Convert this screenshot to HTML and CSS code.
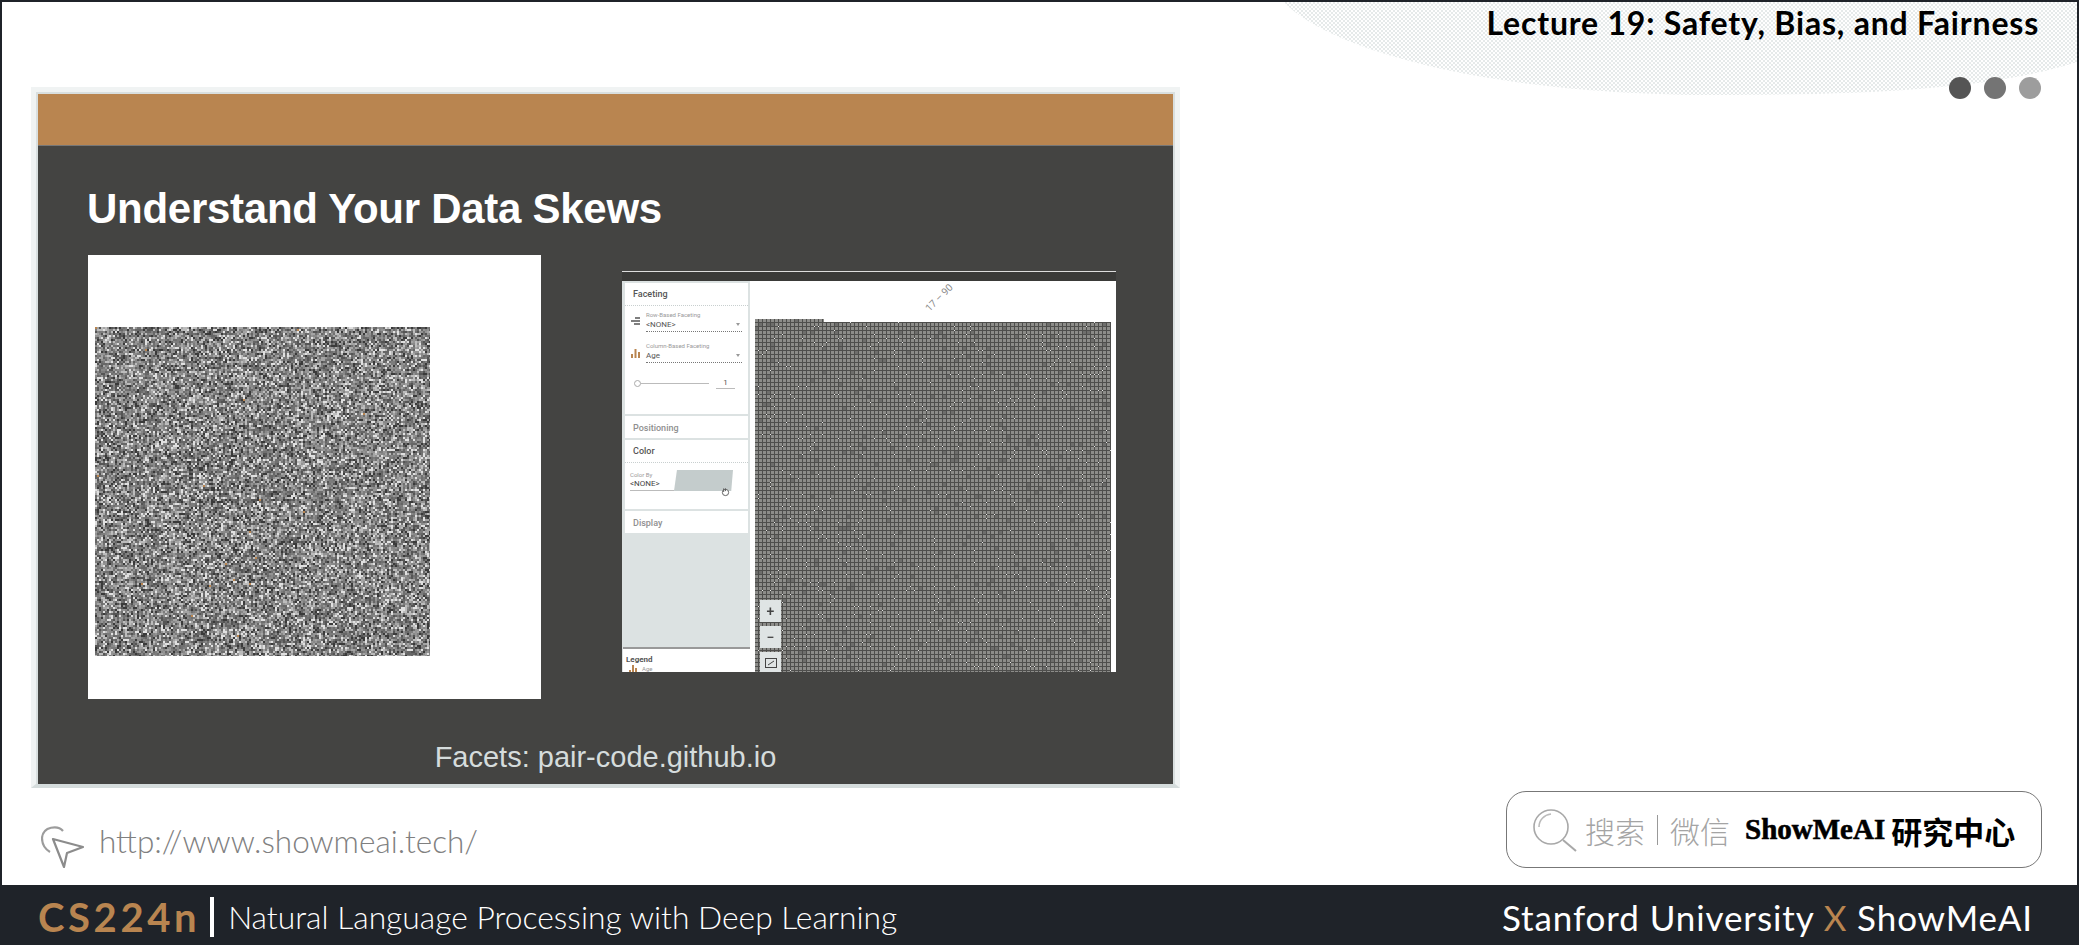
FILE: index.html
```html
<!DOCTYPE html>
<html lang="en">
<head>
    <meta charset="UTF-8">
    <title>Lecture 19: Safety, Bias, and Fairness</title>
    <link rel="stylesheet" href="styles.css">
</head>
<body>
    <div class="page">
        <div class="main">
            <svg class="arc" width="796" height="97" viewBox="0 0 796 97">
                <defs>
                    <pattern id="dither" width="4" height="4" patternUnits="userSpaceOnUse">
                        <rect width="2" height="2" fill="#e6eaea"/>
                        <rect x="2" y="2" width="2" height="2" fill="#e6eaea"/>
                    </pattern>
                </defs>
                <path d="M3 0C40 40 180 93 440 93C600 93 720 85 796 60L796 0Z" fill="url(#dither)"/>
            </svg>
            <div class="dots">
                <span class="dot dot1"></span>
                <span class="dot dot2"></span>
                <span class="dot dot3"></span>
            </div>

            <div class="head">
                <div class="lecture">Lecture 19: Safety, Bias, and Fairness</div>
            </div>

            <div class="slide">
                <div class="slide-bar"></div>
                <div class="slide-body">
                    <h1 class="slide-title">Understand Your Data Skews</h1>
                    <div class="figs">
                        <div class="scatter">
                            <canvas id="scatter" width="335" height="329"></canvas>
                        </div>
                        <div class="shot">
                            <div class="shot-strip"></div>
                            <div class="shot-main">
                                <div class="side">
                                    <div class="panel facet-panel">
                                        <div class="panel-title">Faceting</div>
                                        <div class="facet-row">
                                            <svg class="facet-icon" width="10" height="9" viewBox="0 0 10 9">
                                                <path d="M4 1H9M0 4H9M3 7H9" stroke="#555" stroke-width="1.6"/>
                                            </svg>
                                            <div class="facet-field">
                                                <div class="tiny">Row-Based Faceting</div>
                                                <div class="select"><span>&lt;NONE&gt;</span><span class="caret"></span></div>
                                            </div>
                                        </div>
                                        <div class="facet-row">
                                            <svg class="facet-icon" width="10" height="10" viewBox="0 0 10 10">
                                                <path d="M1 10V6M4.500 10V1M8 10V4" stroke="#b98550" stroke-width="2"/>
                                            </svg>
                                            <div class="facet-field">
                                                <div class="tiny">Column-Based Faceting</div>
                                                <div class="select"><span>Age</span><span class="caret"></span></div>
                                            </div>
                                        </div>
                                        <div class="slider-row">
                                            <span class="knob"></span>
                                            <span class="track"></span>
                                            <span class="slider-val">1</span>
                                        </div>
                                    </div>
                                    <div class="panel closed-panel"><div class="panel-title muted">Positioning</div></div>
                                    <div class="panel color-panel">
                                        <div class="panel-title">Color</div>
                                        <div class="color-row">
                                            <div class="color-field">
                                                <div class="tiny">Color By</div>
                                                <div class="color-val">&lt;NONE&gt;</div>
                                            </div>
                                            <div class="swatch"></div>
                                            <svg class="hand" width="9" height="10" viewBox="0 0 10 10">
                                                <circle cx="5" cy="5.500" r="3.500" fill="#fff" stroke="#555"/>
                                                <path d="M3 1V5M5 1V4" stroke="#555"/>
                                            </svg>
                                        </div>
                                    </div>
                                    <div class="panel closed-panel"><div class="panel-title muted">Display</div></div>
                                    <div class="legend">
                                        <div class="legend-title">Legend</div>
                                        <div class="legend-row">
                                            <svg width="9" height="7" viewBox="0 0 9 7">
                                                <path d="M1 7V5M4 7V0M7 7V3" stroke="#b98550" stroke-width="2"/>
                                            </svg>
                                            <span class="tiny">Age</span>
                                        </div>
                                    </div>
                                </div>
                                <div class="map">
                                    <span class="age-label">17 – 90</span>
                                    <canvas id="grid" width="356" height="353"></canvas>
                                    <div class="map-btns">
                                        <div class="map-btn">+</div>
                                        <div class="map-btn">−</div>
                                        <div class="map-btn">
                                            <svg width="12" height="10" viewBox="0 0 12 10">
                                                <rect x="0.500" y="0.500" width="11" height="9" fill="none" stroke="#444"/>
                                                <path d="M3 7L9 3" stroke="#444"/>
                                            </svg>
                                        </div>
                                    </div>
                                </div>
                            </div>
                        </div>
                    </div>
                    <div class="caption">Facets: pair-code.github.io</div>
                </div>
            </div>

            <div class="bottom">
                <div class="site">
                    <svg class="site-icon" width="43" height="42" viewBox="0 0 43 42">
                        <path d="M12 13L42 21L26 27L23 41Z" fill="none" stroke="#8c8c8c" stroke-width="2.200" stroke-linejoin="round"/>
                        <path d="M22 5C17 -1 2 0 1 12C1 18 4 23 9 26" fill="none" stroke="#9c9c9c" stroke-width="2.200"/>
                    </svg>
                    <span class="site-url">http://www.showmeai.tech/</span>
                </div>
                <div class="search">
                    <svg class="search-icon" width="44" height="44" viewBox="0 0 44 44">
                        <circle cx="18" cy="19" r="17" fill="none" stroke="#a8a8a8" stroke-width="1.600"/>
                        <path d="M6 19C6 12 11 7 18 6" fill="none" stroke="#bbb" stroke-width="1.600"/>
                        <path d="M30 32L43 43" stroke="#a8a8a8" stroke-width="2"/>
                    </svg>
                    <span class="search-cn">搜索</span>
                    <span class="search-sep"></span>
                    <span class="search-cn">微信</span>
                    <span class="search-brand">ShowMeAI</span>
                    <span class="search-org">研究中心</span>
                </div>
            </div>
        </div>

        <div class="foot">
            <div class="foot-left">
                <span class="course">CS224n</span>
                <span class="foot-bar"></span>
                <span class="course-name">Natural Language Processing with Deep Learning</span>
            </div>
            <div class="foot-right">Stanford University <span class="foot-x">X</span> ShowMeAI</div>
        </div>
    </div>
    <script src="noise.js"></script>
</body>
</html>
```

FILE: styles.css
```css
body {
    margin: 0;
    font-family: "Liberation Sans", sans-serif;
    background-color: #fff;
}

.page {
    width: 2079px;
    height: 945px;
    display: flex;
    flex-direction: column;
    overflow: hidden;
}

.main {
    flex: 1;
    position: relative;
    display: flex;
    flex-direction: column;
    box-sizing: border-box;
    border: 2px solid #1f2329;
    border-bottom: none;
}

/* corner decoration */
.arc {
    position: absolute;
    top: 0;
    right: 0;
}

.dots {
    position: absolute;
    top: 75px;
    right: 36px;
    display: flex;
    gap: 13px;
}

.dot {
    width: 22px;
    height: 22px;
    border-radius: 50%;
}

.dot1 { background-color: #555; }
.dot2 { background-color: #747474; }
.dot3 { background-color: #9d9d9d; }

.head {
    position: relative;
    height: 85px;
    display: flex;
    justify-content: flex-end;
    padding-right: 38px;
}

.lecture {
    font-family: Lato, sans-serif;
    font-weight: 700;
    font-size: 32px;
    letter-spacing: 0.8px;
    line-height: 36px;
    margin-top: 3px;
    color: #000;
}

/* slide */
.slide {
    position: relative;
    width: 1135px;
    height: 690px;
    margin-left: 29px;
    display: flex;
    flex-direction: column;
    padding: 2px 2px 0;
    background-color: #d9dfdf;
    border: 5px solid #f0f3f3;
    border-bottom: 4px solid #d5dcdc;
}

.slide-bar {
    height: 52px;
    background-color: #b98550;
    border-bottom: 1px solid #777;
    box-sizing: border-box;
}

.slide-body {
    flex: 1;
    background-color: #444442;
    padding-left: 50px;
}

.slide-title {
    margin: 43px 0 26px -1px;
    font-size: 42px;
    letter-spacing: -0.27px;
    line-height: 40px;
    font-weight: 700;
    color: #fff;
}

.figs {
    display: flex;
    align-items: flex-start;
    gap: 81px;
}

.scatter {
    width: 453px;
    height: 444px;
    box-sizing: border-box;
    padding: 72px 0 0 7px;
    background-color: #fff;
}

canvas {
    display: block;
}

.caption {
    margin: 43px 0 0 -50px;
    text-align: center;
    font-size: 29px;
    line-height: 30px;
    color: #d5dcdc;
}

/* facets screenshot */
.shot {
    width: 494px;
    height: 401px;
    margin-top: 16px;
    display: flex;
    flex-direction: column;
    font-family: Roboto, sans-serif;
    color: #555;
    border-top: 1px solid #ddd;
    box-sizing: border-box;
}

.shot-strip {
    height: 9px;
    background-color: #3a3a38;
}

.shot-main {
    flex: 1;
    display: flex;
    min-height: 0;
    background-color: #fff;
    border-left: 1px solid #dde2e2;
}

.side {
    width: 127px;
    display: flex;
    flex-direction: column;
    gap: 2px;
    padding-top: 2px;
    box-sizing: border-box;
    background-color: #dce2e2;
}

.panel {
    position: relative;
    margin: 0 2px;
    background-color: #fff;
}

.panel-title {
    padding-left: 8px;
    font-size: 9px;
    font-weight: 500;
    line-height: 22px;
}

.muted {
    color: #8f8f8f;
}

.facet-panel {
    height: 131px;
}

.facet-panel > .panel-title,
.color-panel > .panel-title {
    border-bottom: 1px dotted #c8cfcf;
}

.closed-panel {
    height: 22px;
}

.closed-panel > .panel-title {
    line-height: 24px;
}

.tiny {
    font-size: 6px;
    line-height: 7px;
    color: #999;
}

.facet-row {
    display: flex;
    align-items: center;
    gap: 5px;
    padding: 3px 6px 0 6px;
    height: 25px;
}

.facet-row + .facet-row {
    padding-top: 6px;
}

.facet-icon {
    flex: none;
}

.facet-field {
    flex: 1;
}

.select {
    display: flex;
    justify-content: space-between;
    align-items: center;
    font-size: 8px;
    line-height: 13px;
    padding-right: 2px;
    border-bottom: 1px dotted #777;
}

.caret {
    width: 0;
    height: 0;
    border-left: 2.500px solid transparent;
    border-right: 2.500px solid transparent;
    border-top: 3px solid #999;
}

.slider-row {
    display: flex;
    align-items: center;
    padding: 12px 11px 0 9px;
}

.knob {
    width: 5px;
    height: 5px;
    border: 1px solid #aaa;
    border-radius: 50%;
}

.track {
    width: 68px;
    height: 1px;
    background-color: #bbb;
}

.slider-val {
    width: 19px;
    margin-left: 7px;
    text-align: center;
    font-size: 8px;
    line-height: 11px;
    border-bottom: 1px solid #bbb;
}

.color-panel {
    height: 69px;
}

.color-row {
    position: relative;
    display: flex;
    align-items: flex-end;
    padding: 7px 0 0 5px;
}

.color-field {
    width: 44px;
    border-bottom: 1px solid #bbb;
}

.color-val {
    font-size: 8px;
    line-height: 12px;
    color: #444;
}

.swatch {
    width: 59px;
    height: 21px;
    background-color: #c4cccc;
    clip-path: polygon(5% 0, 100% 0, 97% 100%, 0 100%);
}

.hand {
    position: absolute;
    left: 96px;
    top: 24px;
}

.legend {
    flex: 1;
    margin-top: auto;
    max-height: 25px;
    box-sizing: border-box;
    padding: 6px 0 0 3px;
    overflow: hidden;
    background-color: #fff;
    border-top: 2px solid #999;
}

.legend-title {
    font-size: 8px;
    font-weight: 700;
    line-height: 10px;
}

.legend-row {
    display: flex;
    align-items: flex-end;
    gap: 4px;
    padding-left: 3px;
}

.map {
    position: relative;
    flex: 1;
    padding: 38px 5px 0;
    overflow: hidden;
}

.age-label {
    position: absolute;
    left: 172px;
    top: 11px;
    font-size: 10px;
    color: #888;
    transform: rotate(-45deg);
}

.map-btns {
    position: absolute;
    left: 10px;
    top: 319px;
    display: flex;
    flex-direction: column;
    gap: 4px;
}

.map-btn {
    width: 21px;
    height: 22px;
    display: flex;
    align-items: center;
    justify-content: center;
    background-color: #dfe4e4;
    font-size: 14px;
    font-weight: 500;
    color: #444;
}

/* bottom row */
.bottom {
    position: relative;
    flex: 1;
    display: flex;
    justify-content: space-between;
    align-items: flex-start;
    padding: 3px 35px 0 39px;
}

.site {
    display: flex;
    align-items: center;
    gap: 15px;
    margin-top: 29px;
}

.site-url {
    font-family: Lato, sans-serif;
    font-weight: 300;
    font-size: 31.500px;
    line-height: 42px;
    margin-bottom: 11px;
    color: #808080;
}

.search {
    width: 536px;
    height: 77px;
    box-sizing: border-box;
    display: flex;
    align-items: center;
    padding-left: 26px;
    border: 1px solid #777;
    border-radius: 20px;
}

.search-icon {
    flex: none;
    margin-right: 8px;
}

.search-cn {
    font-family: "Noto Sans CJK SC", sans-serif;
    font-weight: 300;
    font-size: 30px;
    color: #a4a4a4;
}

.search-sep {
    width: 1px;
    height: 30px;
    margin: 0 12px;
    background-color: #999;
}

.search-brand {
    margin-left: 15px;
    font-family: "Liberation Serif", serif;
    font-weight: 700;
    font-size: 29px;
    -webkit-text-stroke: 0.6px #000;
    color: #000;
}

.search-org {
    margin-left: 6px;
    margin-top: 2px;
    font-family: "Noto Sans CJK SC", sans-serif;
    font-weight: 700;
    font-size: 31px;
    color: #000;
}

/* footer */
.foot {
    height: 60px;
    box-sizing: border-box;
    display: flex;
    justify-content: space-between;
    align-items: center;
    padding: 3px 46px 0 38px;
    background-color: #1f2329;
    color: #fff;
    font-family: Lato, sans-serif;
}

.foot-left {
    display: flex;
    align-items: center;
}

.course {
    font-size: 40px;
    font-weight: 700;
    letter-spacing: 3.6px;
    color: #b98550;
}

.foot-bar {
    width: 4px;
    height: 40px;
    margin: 0 14px 0 10px;
    background-color: #fff;
}

.course-name {
    font-size: 31.800px;
    font-weight: 300;
}

.foot-right {
    font-size: 35px;
    letter-spacing: 0.9px;
    font-weight: 400;
}

.foot-x {
    color: #b98550;
}
```

FILE: noise.js
```js
// small seeded random so the picture stays the same on every load
var seed = 19;
function rnd() {
    seed = (seed * 16807) % 2147483647;
    return seed / 2147483647;
}

function drawScatter() {
    var ctx = document.getElementById('scatter').getContext('2d');
    var grays = ['#3a3a3a', '#555', '#666', '#707070', '#7c7c7c', '#888', '#949494', '#a4a4a4', '#bcbcbc', '#e0e0e0'];
    for (var y = 0; y < 329; y += 2) {
        for (var x = 0; x < 335; x += 2) {
            var r = rnd();
            ctx.fillStyle = grays[Math.floor(rnd() * grays.length)];
            if (r < 0.0006) ctx.fillStyle = '#b98550';
            ctx.fillRect(x, y, r < 0.4 ? 4 : 2, 2);
        }
    }
}

function drawGrid() {
    var ctx = document.getElementById('grid').getContext('2d');
    ctx.fillStyle = '#4e4e4c';
    ctx.fillRect(0, 0, 356, 353);
    for (var y = 0; y < 353; y += 4) {
        for (var x = 0; x < 356; x += 4) {
            var r = rnd();
            ctx.fillStyle = r < 0.04 ? '#6e6e6c' : '#8c8c89';
            ctx.fillRect(x, y, 3, 3);
            if (r > 0.94) {
                ctx.fillStyle = '#e8e8e8';
                ctx.fillRect(x + 3, y + 3, 1, 1);
            }
        }
    }
    // the first column of cells stands a little higher than the others
    ctx.fillStyle = '#fff';
    ctx.fillRect(69, 0, 287, 3);
}

drawScatter();
drawGrid();
```
